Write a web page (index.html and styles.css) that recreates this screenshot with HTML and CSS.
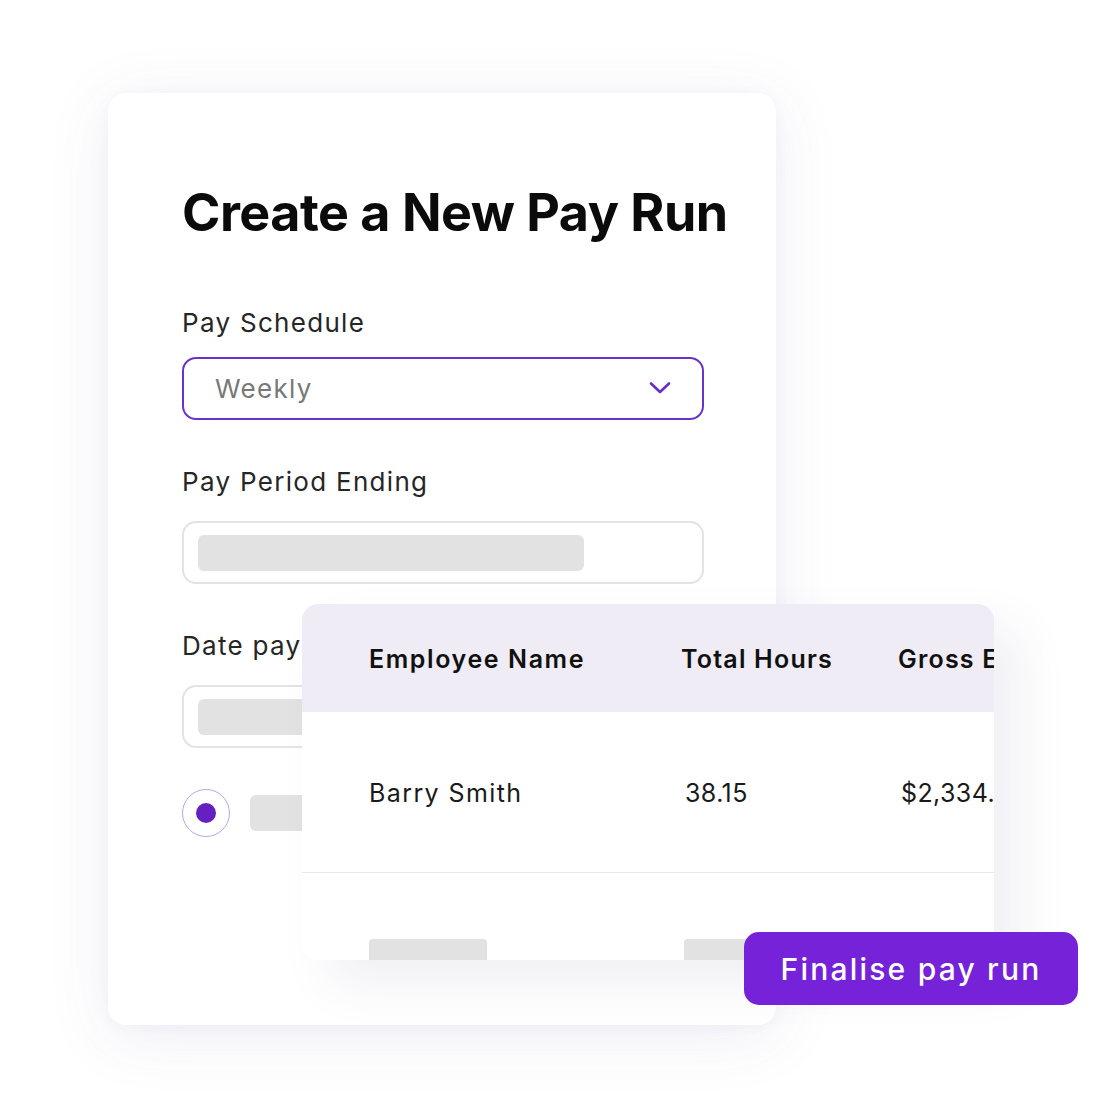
FILE: index.html
```html
<!DOCTYPE html>
<html lang="en">
<head>
<meta charset="utf-8">
<title>Create a New Pay Run</title>
<link rel="stylesheet" href="styles.css">
</head>
<body>
<div class="stage">
  <div class="card">
    <h1 class="title">Create a New Pay Run</h1>
    <div class="field field-first">
      <div class="label">Pay Schedule</div>
      <div class="select">
        <span class="select-value">Weekly</span>
        <svg class="chevron" width="22" height="14" viewBox="0 0 22 14" aria-hidden="true">
          <path d="M2 2.5 L11 11 L20 2.5" fill="none" stroke="#6a2bc9" stroke-width="2.6" stroke-linecap="round" stroke-linejoin="round"/>
        </svg>
      </div>
    </div>
    <div class="field">
      <div class="label">Pay Period Ending</div>
      <div class="input"><div class="skeleton skeleton-wide"></div></div>
    </div>
    <div class="field">
      <div class="label">Date pay</div>
      <div class="input"><div class="skeleton skeleton-wide"></div></div>
    </div>
    <div class="radio-row">
      <span class="radio"><span class="radio-dot"></span></span>
      <span class="skeleton skeleton-radio"></span>
    </div>
  </div>

  <div class="table-card">
    <div class="t-row t-head">
      <div class="c c1">Employee Name</div>
      <div class="c c2">Total Hours</div>
      <div class="c c3">Gross Earnings</div>
    </div>
    <div class="t-row t-body">
      <div class="c c1">Barry Smith</div>
      <div class="c c2 num">38.15</div>
      <div class="c c3 num">$2,334.50</div>
    </div>
    <div class="t-row t-ghost">
      <div class="c c1"><span class="skeleton ghost-bar"></span></div>
      <div class="c c2"><span class="skeleton ghost-bar"></span></div>
    </div>
  </div>

  <button class="finalise" type="button">Finalise pay run</button>
</div>
</body>
</html>
```

FILE: styles.css
```css
* { box-sizing: border-box; }

html, body {
  margin: 0;
  padding: 0;
  background: #ffffff;
}

body {
  font-family: Inter, "Noto Sans", "Liberation Sans", sans-serif;
  color: #1f1f1f;
}

.stage {
  position: relative;
  width: 1120px;
  height: 1120px;
  overflow: hidden;
  padding: 93px 0 0 108px;
}

.card {
  width: 668px;
  height: 932px;
  background: #ffffff;
  border-radius: 18px;
  box-shadow: 0 10px 64px rgba(88, 70, 150, 0.10), 0 2px 14px rgba(88, 70, 150, 0.04);
  padding: 90px 0 0 74px;
}

.title {
  margin: 0;
  font-size: 52px;
  line-height: 60px;
  font-weight: 700;
  letter-spacing: -0.5px;
  color: #0b0b0b;
}

.label {
  font-size: 26px;
  line-height: 32px;
  letter-spacing: 1.3px;
  color: #262626;
  margin: 0 0 23px 0;
}

.title + .field { margin-top: 64px; }

.field-first .label { margin-bottom: 18px; }

.field + .field { margin-top: 46px; }

.select,
.input {
  width: 522px;
  height: 63px;
  border-radius: 14px;
  display: flex;
  align-items: center;
}

.select {
  border: 2px solid #6a33c8;
  justify-content: space-between;
  padding: 0 31px 0 31px;
}

.select-value {
  font-size: 26px;
  letter-spacing: 1.3px;
  color: #787878;
}

.chevron { display: block; margin-top: -2px; }

.input {
  border: 2px solid #e3e3e3;
  padding: 0 14px;
}

.skeleton {
  display: block;
  background: #e2e2e2;
  border-radius: 6px;
}

.skeleton-wide {
  width: 386px;
  height: 36px;
}

.radio-row {
  display: flex;
  align-items: center;
  gap: 20px;
  margin-top: 41px;
}

.radio {
  width: 48px;
  height: 48px;
  border-radius: 50%;
  border: 1.5px solid #b9a6e8;
  display: flex;
  align-items: center;
  justify-content: center;
}

.radio-dot {
  width: 20px;
  height: 20px;
  border-radius: 50%;
  background: #6420c0;
}

.skeleton-radio {
  width: 120px;
  height: 36px;
}

/* overlapping table card */
.table-card {
  position: absolute;
  left: 302px;
  top: 604px;
  width: 692px;
  height: 356px;
  background: #ffffff;
  border-radius: 16px;
  overflow: hidden;
  box-shadow: 26px 24px 50px rgba(70, 60, 130, 0.08);
}

.t-row {
  display: flex;
  align-items: center;
  padding-left: 67px;
}

.t-head {
  height: 108px;
  background: #efecf5;
  font-weight: 600;
  font-size: 25px;
  letter-spacing: 1.2px;
  color: #111111;
  padding-top: 2px;
}

.t-head .c1 { letter-spacing: 1.6px; }

.t-body {
  height: 161px;
  border-bottom: 1.5px solid #e9e9ec;
  font-size: 25px;
  letter-spacing: 1.4px;
  color: #1a1a1a;
  padding-top: 2px;
}

.t-ghost {
  height: 100px;
  align-items: flex-start;
  padding-top: 66px;
}

.c { white-space: nowrap; flex: none; }
.c1 { width: 312px; }
.c2 { width: 217px; }
.c3 { width: 200px; }

.num { letter-spacing: 0.4px; }
.num.c2 { padding-left: 4px; }
.num.c3 { padding-left: 3px; }

.ghost-bar {
  width: 118px;
  height: 30px;
  border-radius: 4px;
}

.t-ghost .c2 { padding-left: 3px; }

.finalise {
  position: absolute;
  left: 744px;
  top: 932px;
  width: 334px;
  height: 73px;
  border: 0;
  border-radius: 15px;
  background: #7522d8;
  color: #ffffff;
  font-family: Inter, "Noto Sans", "Liberation Sans", sans-serif;
  font-size: 30px;
  font-weight: 500;
  letter-spacing: 2.2px;
  padding: 0;
  cursor: pointer;
}
```
